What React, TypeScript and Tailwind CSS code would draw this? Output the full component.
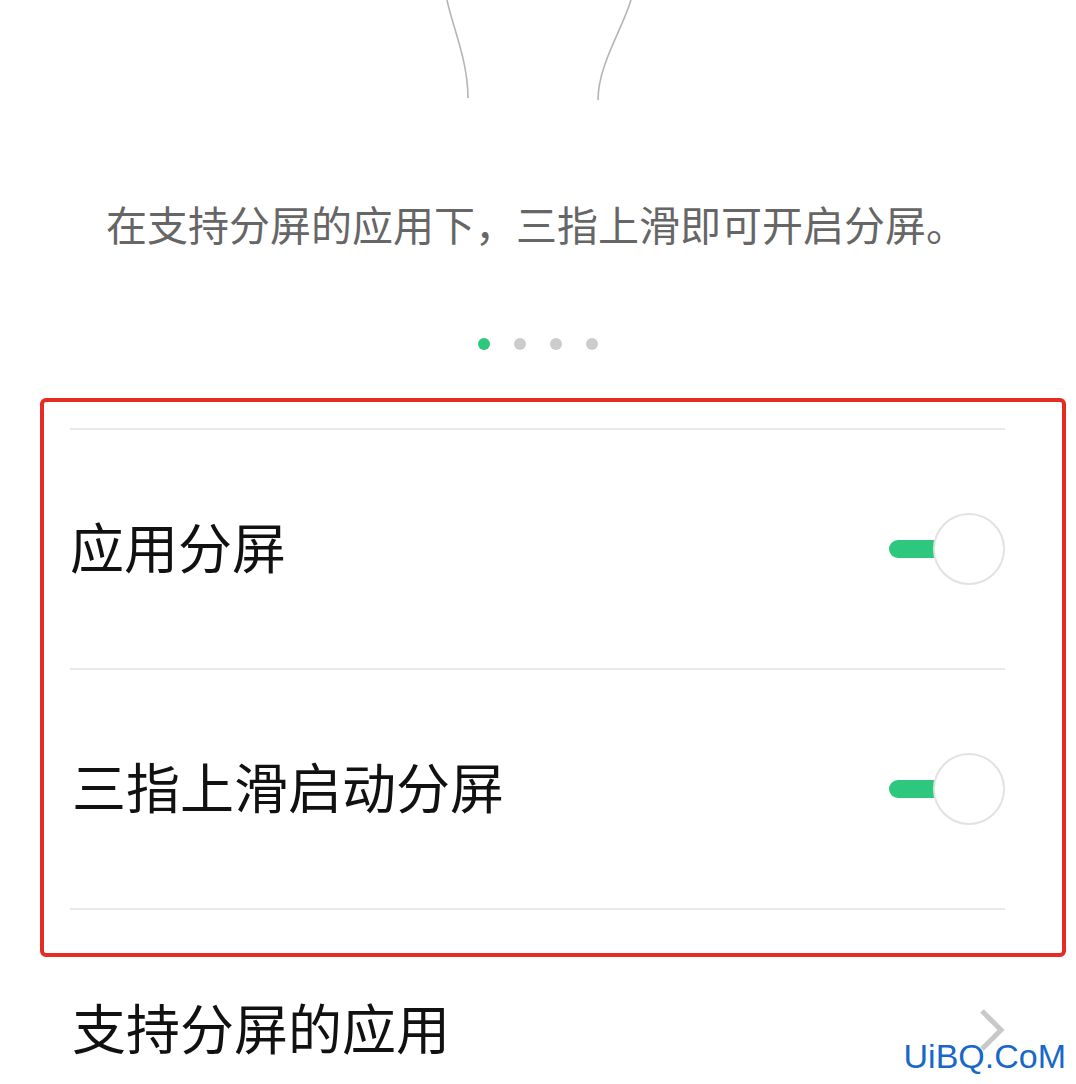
import React from "react";

function Toggle() {
  return (
    <div className="relative w-[116px] h-[72px] shrink-0">
      <div className="absolute left-0 top-[27px] w-[60px] h-[18px] rounded-l-full bg-[#2dc77e]" />
      <div className="absolute right-0 top-0 w-[72px] h-[72px] rounded-full bg-white border-2 border-[#e2e2e2]" />
    </div>
  );
}

export default function App() {
  return (
    <div className="w-[1076px] h-[1084px] bg-white relative overflow-hidden font-['Noto_Sans_CJK_SC','Noto_Sans',sans-serif]">
      <svg width="1076" height="110" viewBox="0 0 1076 110" className="block">
        <path d="M447 0 C 452 25, 468 60, 468 98" fill="none" stroke="#b5b5b5" strokeWidth="1.6" />
        <path d="M631 0 C 622 30, 598 65, 598 100" fill="none" stroke="#b5b5b5" strokeWidth="1.6" />
      </svg>

      <p className="mt-[89px] pl-[106px] text-[41px] leading-[48px] text-[#666666]">
        在支持分屏的应用下，三指上滑即可开启分屏。
      </p>

      <div className="mt-[91px] flex justify-center gap-[24px] h-[12px]">
        <span className="w-[12px] h-[12px] rounded-full bg-[#2dc77e]" />
        <span className="w-[12px] h-[12px] rounded-full bg-[#cccccc]" />
        <span className="w-[12px] h-[12px] rounded-full bg-[#cccccc]" />
        <span className="w-[12px] h-[12px] rounded-full bg-[#cccccc]" />
      </div>

      <div className="mt-[48px] ml-[40px] w-[1026px] h-[559px] border-4 border-[#e52b22] rounded-[6px] pt-[26px] pl-[26px] pr-[57px]">
        <div className="h-[2px] bg-[#e8e8e8]" />
        <div className="h-[238px] flex items-center justify-between">
          <span className="text-[54px] leading-[64px] pb-[6px] text-[#111111]">应用分屏</span>
          <Toggle />
        </div>
        <div className="h-[2px] bg-[#e8e8e8]" />
        <div className="h-[238px] flex items-center justify-between">
          <span className="text-[54px] leading-[64px] pb-[6px] text-[#111111] pl-[2px]">三指上滑启动分屏</span>
          <Toggle />
        </div>
        <div className="h-[2px] bg-[#e8e8e8]" />
      </div>

      <div className="h-[146px] flex items-center justify-between pl-[72px] pr-[71px]">
        <span className="text-[54px] leading-[64px] pb-[6px] text-[#111111]">支持分屏的应用</span>
        <svg width="26" height="44" viewBox="0 0 26 44">
          <path d="M3 3 L22 22 L3 41" fill="none" stroke="#c8c8c8" strokeWidth="5" />
        </svg>
      </div>

      <div className="absolute right-[10px] bottom-[8px] font-['Liberation_Sans',sans-serif] text-[34px] leading-[40px] text-[#1868c8]">
        UiBQ.CoM
      </div>
    </div>
  );
}
